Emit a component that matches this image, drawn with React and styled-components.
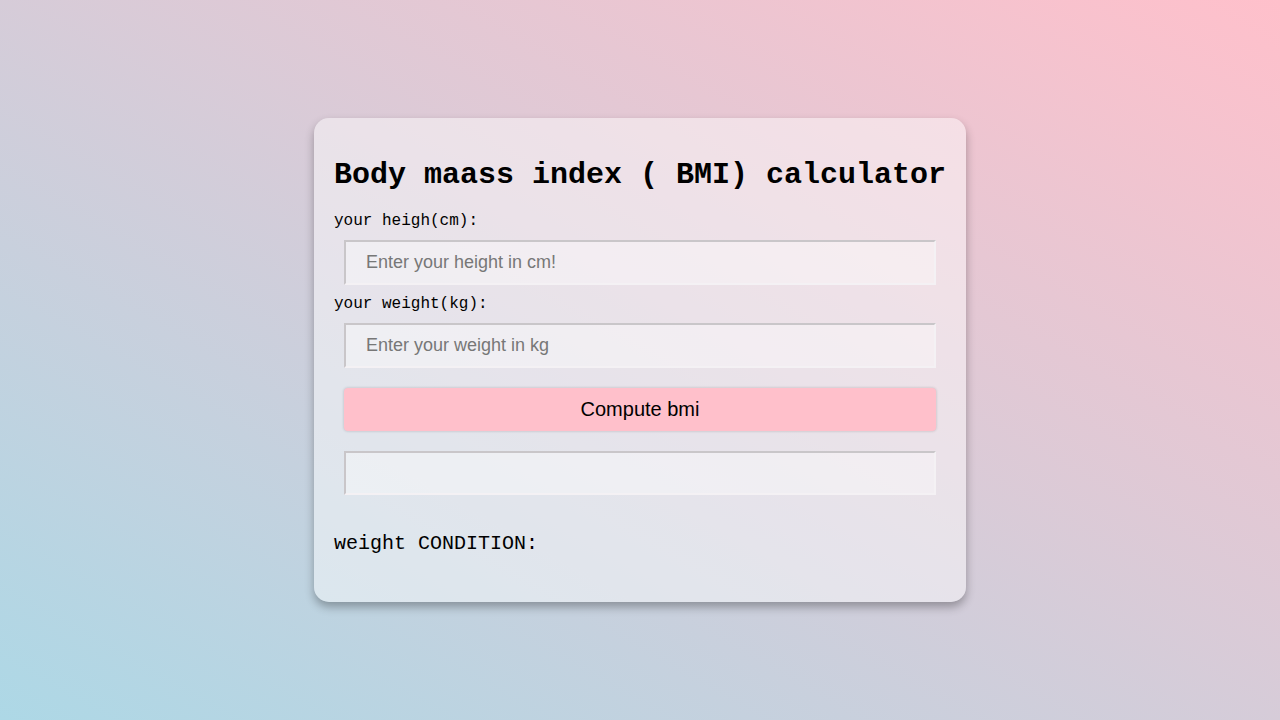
import React, { useState } from 'react';
import styled, { createGlobalStyle } from 'styled-components';

const GlobalStyle = createGlobalStyle`
    html, body {
        margin: 0;
        padding: 0;
        height: 100%;
    }
    body {
        background: linear-gradient(to top right, #add8e6, #ffc0cb);
        font-family: "Liberation Mono", "Courier New", monospace;
    }
`;

const Page = styled.div`
    width: 1280px;
    height: 720px;
    display: flex;
    justify-content: center;
    align-items: flex-start;
    padding-top: 118px;
    box-sizing: border-box;
`;

const Card = styled.div`
    width: 652px;
    box-sizing: border-box;
    padding: 20px;
    display: flex;
    flex-direction: column;
    border-radius: 15px;
    background: rgba(255, 255, 255, 0.45);
    box-shadow: 0 5px 10px rgba(0, 0, 0, 0.3);
`;

const Title = styled.h1`
    margin: 20px 0;
    font-size: 30px;
    line-height: 34px;
    font-weight: bold;
    white-space: nowrap;
    color: #000;
`;

const Label = styled.label`
    font-size: 16px;
    line-height: 18px;
    color: #000;
`;

const Field = styled.input`
    margin: 10px;
    height: ${p => p.$h || 45}px;
    box-sizing: border-box;
    padding: 0 20px;
    border-width: 2px;
    border-style: solid;
    border-color: #c9c6c9 #f4f1f4 #f4f1f4 #c9c6c9;
    background: rgba(255, 255, 255, 0.4);
    font-family: "Liberation Sans", Arial, sans-serif;
    font-size: 18px;
    color: #000;
    outline: none;

    &::placeholder {
        color: #777;
    }
`;

const Button = styled.button`
    margin: 10px;
    height: 43px;
    border: none;
    border-radius: 4px;
    background: #ffc0cb;
    box-shadow: 0 0 3px rgba(0, 0, 0, 0.2);
    font-family: "Liberation Sans", Arial, sans-serif;
    font-size: 20px;
    color: #000;
    cursor: pointer;
`;

const Condition = styled.p`
    margin: 27px 0;
    font-size: 20px;
    line-height: 23px;
    color: #000;
`;

export default function App() {
    const [height, setHeight] = useState('');
    const [weight, setWeight] = useState('');
    const [bmi, setBmi] = useState('');
    const [condition, setCondition] = useState('');

    const compute = () => {
        const h = parseFloat(height) / 100;
        const w = parseFloat(weight);
        if (!h || !w) return;
        const value = w / (h * h);
        setBmi(value.toFixed(2));
        if (value < 18.5) setCondition('Under weight');
        else if (value < 25) setCondition('Normal weight');
        else if (value < 30) setCondition('Overweight');
        else setCondition('Obesity');
    };

    return (
        <Page>
            <GlobalStyle />
            <Card>
                <Title>Body maass index ( BMI) calculator</Title>
                <Label>your heigh(cm):</Label>
                <Field
                    type="number"
                    placeholder="Enter your height in cm!"
                    value={height}
                    onChange={e => setHeight(e.target.value)} />
                <Label>your weight(kg):</Label>
                <Field
                    type="number"
                    placeholder="Enter your weight in kg"
                    value={weight}
                    onChange={e => setWeight(e.target.value)} />
                <Button onClick={compute}>Compute bmi</Button>
                <Field $h={44} type="text" value={bmi} readOnly />
                <Condition>weight CONDITION: {condition}</Condition>
            </Card>
        </Page>
    );
}
